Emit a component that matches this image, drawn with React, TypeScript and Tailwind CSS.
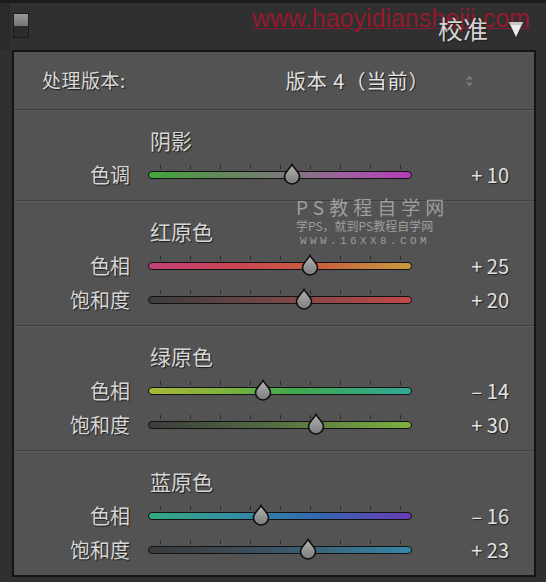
const font = "font-['Noto_Sans_CJK_SC','Noto_Sans',sans-serif]";
const shadow = "[text-shadow:1px_1px_1px_#1e1e1e]";

const ticks = [0, 1, 2, 3, 4, 5, 6, 7, 8];

const Thumb = () => (
  <svg width="20" height="22" viewBox="0 0 20 22">
    <defs>
      <linearGradient id="th" x1="0" y1="0" x2="0" y2="1">
        <stop offset="0" stopColor="#b4b4b4" />
        <stop offset="1" stopColor="#7c7c7c" />
      </linearGradient>
    </defs>
    <path
      d="M10 1.5 C11.5 5 17.5 9 17.5 13.5 A7.5 7.5 0 0 1 2.5 13.5 C2.5 9 8.5 5 10 1.5 Z"
      fill="url(#th)"
      stroke="#0e0e0e"
      strokeWidth="1.6"
    />
  </svg>
);

const Row = ({ label, value, text, track }: { label: string; value: number; text: string; track: string }) => (
  <div className="flex h-[34px] items-center">
    <div className={`w-[116px] text-right text-[20px] leading-none text-[#d6d6d6] ${shadow}`}>{label}</div>
    <div className="relative ml-[18px] h-[34px] w-[264px]">
      {ticks.map((i) => (
        <div key={i} className="absolute top-[7px] h-[4px] w-px bg-[#2c2c2c]" style={{ left: 12 + i * 30 }} />
      ))}
      <div className={`absolute top-[13px] h-[8px] w-[264px] rounded-full border border-[#121212] ${track}`} />
      <div className="absolute top-[5px]" style={{ left: 132 + value * 1.2 - 10 }}>
        <Thumb />
      </div>
    </div>
    <div className={`ml-auto mr-[25px] text-[20px] leading-none text-[#e2e2e2] ${shadow}`}>{text}</div>
  </div>
);

const Section = ({ title, children, last }: { title: string; children: React.ReactNode; last?: boolean }) => (
  <div className={`pt-[18px] pb-[8px] ${last ? "" : "border-b border-[#3f3f3f] shadow-[0_1px_0_#5c5c5c]"}`}>
    <div className={`ml-[136px] h-[24px] text-[21px] leading-[24px] text-[#d6d6d6] ${shadow}`}>{title}</div>
    <div className="mt-[6px]">{children}</div>
  </div>
);

export default function App() {
  return (
    <div className={`relative h-[582px] w-[546px] overflow-hidden border-t-[3px] border-[#1c1c1c] bg-[#303030] ${font}`}>
      {/* red site watermark, sits under the header title */}
      <div className="absolute left-[252px] top-[2px] font-['Liberation_Sans',sans-serif] text-[25px] leading-[27px] text-[#a8142e]/85 underline decoration-[#a8142e]/70 decoration-1 underline-offset-[1px]">
        www.haoyidianshejii.com
      </div>

      <div className="relative flex h-[47px] items-start border-l-[10px] border-[#2a2a2a]">
        <div className="ml-[3px] mt-[10px] flex h-[25px] w-[16px] flex-col border border-[#1e1e1e]">
          <div className="h-[12px] bg-linear-to-b from-[#9a9a9a] to-[#747474]" />
          <div className="flex-1 bg-[#2c2c2c]" />
        </div>
        <div className={`ml-auto mt-[10px] text-[25px] leading-[30px] text-[#d4d4d4] ${shadow}`}>校准</div>
        <svg className="ml-[20px] mr-[22px] mt-[18px] shrink-0" width="16" height="17" viewBox="0 0 16 17">
          <path d="M1 1 H15 L8 16 Z" fill="#ececec" />
          <path d="M1 1 H15 L13.5 4 H2.5 Z" fill="#c8c8c8" />
        </svg>
      </div>

      <div className="ml-[12px] w-[524px] border-2 border-[#141414] bg-[#535353]">
        <div className="flex h-[58px] items-center border-b border-[#3c3c3c] shadow-[0_1px_0_#5c5c5c]">
          <div className={`ml-[28px] text-[19px] tracking-[0.5px] text-[#d8d8d8] ${shadow}`}>处理版本:</div>
          <div className={`ml-[160px] text-[20px] tracking-[1px] text-[#e2e2e2] ${shadow}`}>版本 4（当前）</div>
          <svg className="ml-[36px]" width="9" height="14" viewBox="0 0 9 14">
            <path d="M1 5.5 L4.5 1.5 L8 5.5 Z M1 8.5 L4.5 12.5 L8 8.5 Z" fill="#7a7a7a" />
          </svg>
        </div>

        <Section title="阴影">
          <Row label="色调" value={10} text="+ 10" track="bg-[linear-gradient(to_right,#44a83c,#5e8a56_25%,#7a7a7a_50%,#a060a0_75%,#b43cb4)]" />
        </Section>

        <Section title="红原色">
          <Row label="色相" value={25} text="+ 25" track="bg-[linear-gradient(to_right,#c4407a,#cc4650_35%,#c8603c_65%,#c89c3c)]" />
          <Row label="饱和度" value={20} text="+ 20" track="bg-[linear-gradient(to_right,#3c3c3c,#6a4646_40%,#c44848)]" />
        </Section>

        <Section title="绿原色">
          <Row label="色相" value={-14} text="– 14" track="bg-[linear-gradient(to_right,#a8b838,#7cb23e_30%,#40a84c_55%,#32a898)]" />
          <Row label="饱和度" value={30} text="+ 30" track="bg-[linear-gradient(to_right,#3c3c3c,#526a42_45%,#7cb040)]" />
        </Section>

        <Section title="蓝原色" last>
          <Row label="色相" value={-16} text="– 16" track="bg-[linear-gradient(to_right,#34a880,#3490a0_30%,#3466b0_65%,#6a3cb4)]" />
          <Row label="饱和度" value={23} text="+ 23" track="bg-[linear-gradient(to_right,#3a3a3a,#3c5060_45%,#3488a8)]" />
        </Section>
      </div>

      <div className="absolute left-[296px] top-[193px] flex flex-col items-start text-[#b8b8b8]/75">
        <div className="text-[19px] leading-[22px] tracking-[5px]">PS教程自学网</div>
        <div className="text-[12px] leading-[15px]">学PS，就到PS教程自学网</div>
        <div className="pl-[4px] font-['Liberation_Mono',monospace] text-[11px] leading-[16px] tracking-[3.4px]">WWW.16XX8.COM</div>
      </div>
    </div>
  );
}
